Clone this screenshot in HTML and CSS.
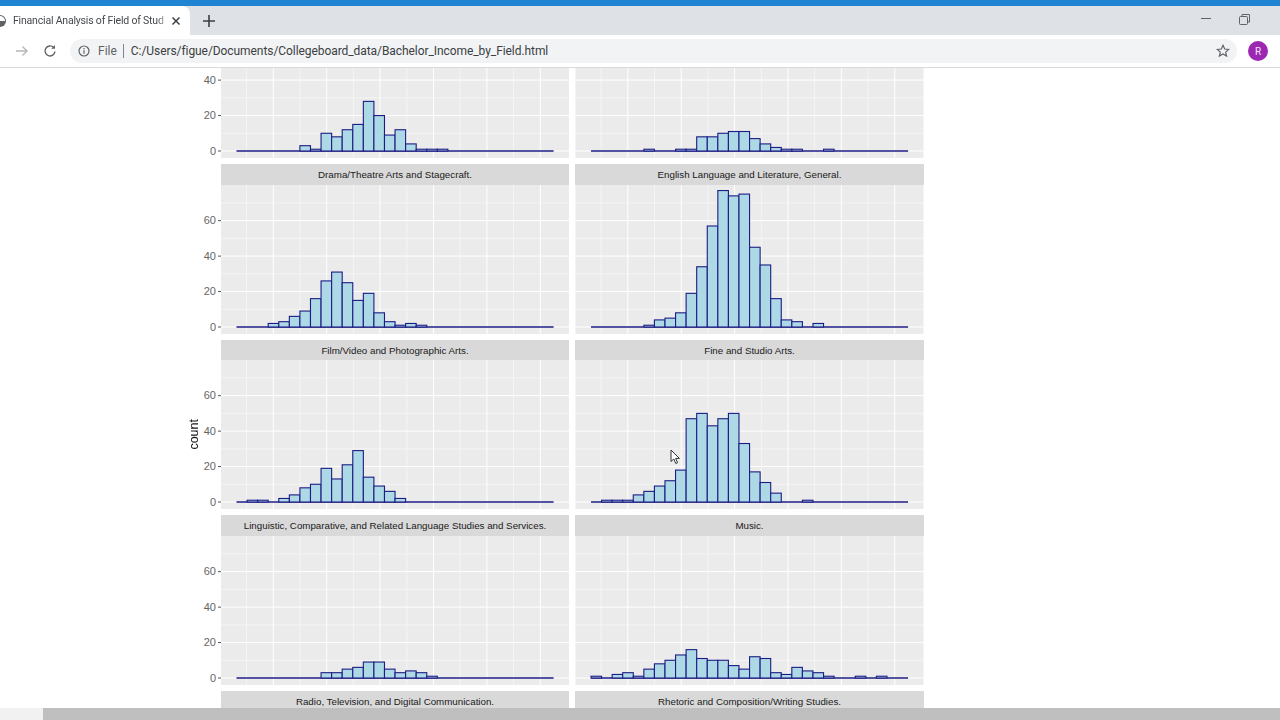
FILE: index.html
```html
<!DOCTYPE html>
<html lang="en">
<head>
<meta charset="utf-8">
<title>Financial Analysis of Field of Study</title>
<link rel="stylesheet" href="styles.css">
</head>
<body>
<div class="app">
  <div class="accent"></div>
  <div class="tabstrip">
    <div class="tab">
      <svg class="favicon" width="16" height="16" viewBox="0 0 16 16"><circle cx="8" cy="8" r="6" fill="#5f6368"/><path d="M8 3a5 5 0 0 1 5 5H8z" fill="#fff"/></svg>
      <span class="tab-title">Financial Analysis of Field of Stud</span>
      <svg class="tab-close" width="10" height="10" viewBox="0 0 10 10"><path d="M1.5 1.5l7 7M8.500 1.500l-7 7" stroke="#3c4043" stroke-width="1.500"/></svg>
    </div>
    <svg class="new-tab" width="12" height="12" viewBox="0 0 12 12"><path d="M6 0v12M0 6h12" stroke="#3c4043" stroke-width="1.600"/></svg>
    <div class="window-controls">
      <svg width="10" height="10" viewBox="0 0 10 10"><path d="M0 4.500h10" stroke="#5f6368" stroke-width="1"/></svg>
      <svg width="11" height="11" viewBox="0 0 11 11" fill="none" stroke="#5f6368"><rect x=".5" y="2.500" width="8" height="8" rx="1"/><path d="M3 2.500V.5h7.500v7.500H8.500"/></svg>
    </div>
  </div>
  <div class="toolbar">
    <svg class="nav-forward" width="14" height="14" viewBox="0 0 14 14" fill="none" stroke="#b4b6b9" stroke-width="1.400"><path d="M1 7h11M7.500 2.500L12 7l-4.500 4.500"/></svg>
    <svg class="nav-reload" width="14" height="14" viewBox="0 0 14 14" fill="none" stroke="#5f6368" stroke-width="1.400"><path d="M12 7.500A5 5 0 1 1 10.500 3.300"/><path d="M12 1v3.800H8.200" fill="#5f6368" stroke="none"/></svg>
    <div class="omnibox">
      <svg class="info" width="12" height="12" viewBox="0 0 12 12" fill="none" stroke="#5f6368" stroke-width="1.200"><circle cx="6" cy="6" r="5"/><path d="M6 5.200v3.600M6 3v1.200"/></svg>
      <span class="scheme">File</span>
      <span class="sep"></span>
      <span class="url">C:/Users/figue/Documents/Collegeboard_data/Bachelor_Income_by_Field.html</span>
      <svg class="star" width="14" height="14" viewBox="0 0 14 14" fill="none" stroke="#5f6368" stroke-width="1.200"><path d="M7 1.300l1.700 3.700 4 .4-3 2.700.9 4L7 10l-3.600 2.100.9-4-3-2.700 4-.4z"/></svg>
    </div>
    <div class="avatar">R</div>
  </div>
  <div class="viewport">
    <div class="plot">
      <div class="y-title">count</div>
      <div class="facets">
        <figure class="facet clipped"><svg class="hist with-axis" data-top="90" data-counts="0,0,0,0,0,0,3,1,10,8,12,15,28,20,9,12,4,1,1,1"></svg></figure>
        <figure class="facet clipped"><svg class="hist" data-top="90" data-counts="0,0,0,0,0,1,0,0,1,1,8,8,10,11,11,7,4,2,1,1,0,0,1"></svg></figure>

        <figure class="facet"><figcaption class="strip">Drama/Theatre Arts and Stagecraft.</figcaption><svg class="hist with-axis" data-counts="0,0,0,2,3,6,9,16,26,31,25,15,19,8,3,1,2,1"></svg></figure>
        <figure class="facet"><figcaption class="strip">English Language and Literature, General.</figcaption><svg class="hist" data-counts="0,0,0,0,0,1,4,5,8,19,34,57,77,74,75,45,35,16,4,3,0,2"></svg></figure>

        <figure class="facet"><figcaption class="strip">Film/Video and Photographic Arts.</figcaption><svg class="hist with-axis" data-counts="0,1,1,0,2,4,8,10,19,13,21,29,14,9,6,2"></svg></figure>
        <figure class="facet"><figcaption class="strip">Fine and Studio Arts.</figcaption><svg class="hist" data-counts="0,1,1,1,4,6,9,12,18,47,50,43,47,50,33,17,11,5,0,0,1"></svg></figure>

        <figure class="facet"><figcaption class="strip">Linguistic, Comparative, and Related Language Studies and Services.</figcaption><svg class="hist with-axis" data-counts="0,0,0,0,0,0,0,0,3,3,5,6,9,9,5,3,4,3,1"></svg></figure>
        <figure class="facet"><figcaption class="strip">Music.</figcaption><svg class="hist" data-counts="1,0,2,3,1,5,8,10,13,16,11,10,10,7,5,12,11,3,2,6,4,3,1,0,0,1,0,1"></svg></figure>

        <figure class="facet"><figcaption class="strip">Radio, Television, and Digital Communication.</figcaption></figure>
        <figure class="facet"><figcaption class="strip">Rhetoric and Composition/Writing Studies.</figcaption></figure>
      </div>
    </div>
    <svg class="cursor" width="12" height="16" viewBox="0 0 12 16"><path d="M1 1v11.500l2.800-2.500 2 4.500 1.800-.8-2-4.300h3.800z" fill="#fff" stroke="#333" stroke-width="1"/></svg>
  </div>
  <div class="scrollbar"><div class="scroll-thumb"></div></div>
</div>
<script src="app.js"></script>
</body>
</html>
```
FILE: styles.css
```css
* { box-sizing: border-box; }
html, body { margin: 0; height: 100%; overflow: hidden; background: #fff; }
body { font-family: "Liberation Sans", Arial, sans-serif; color: #3c4043; }

.app { display: flex; flex-direction: column; height: 720px; width: 1280px; overflow: hidden; }
.accent { height: 6px; background: #1f84d2; flex: none; }

.tabstrip { height: 29px; flex: none; background: #dee1e6; display: flex; align-items: center; }
.tab { width: 190px; height: 29px; padding-right: 9px; background: #fff; border-top-right-radius: 8px; display: flex; align-items: center; gap: 5px; flex: none; overflow: hidden; }
.favicon { flex: none; margin-left: -8px; }
.tab-title { font-size: 10.500px; color: #45484c; white-space: nowrap; flex: 1; min-width: 0; font-family: Roboto, sans-serif; letter-spacing: -.19px; -webkit-mask-image: linear-gradient(to right, #000 94%, rgba(0,0,0,.35)); mask-image: linear-gradient(to right, #000 94%, rgba(0,0,0,.35)); }
.tab-close { flex: none; }
.new-tab { margin-left: 13px; flex: none; }
.window-controls { margin-left: auto; padding-right: 30px; display: flex; align-items: center; gap: 28px; margin-top: -3px; }

.toolbar { height: 33px; flex: none; background: #fff; border-bottom: 1px solid #d9dadc; display: flex; align-items: center; padding: 0 12px 0 15px; }
.nav-forward { flex: none; }
.nav-reload { flex: none; margin-left: 14px; }
.omnibox { margin-left: 13px; flex: 1; height: 24px; background: #f1f3f4; border-radius: 12px; display: flex; align-items: center; padding: 0 7px 0 8px; font-size: 12px; font-family: Roboto, sans-serif; }
.info { flex: none; }
.scheme { margin-left: 8px; color: #5f6368; }
.sep { width: 1px; height: 14px; background: #80868b; margin: 0 7px 0 6px; }
.url { color: #3c4043; letter-spacing: -.07px; }
.star { margin-left: auto; }
.avatar { margin-left: 11px; width: 20px; height: 20px; border-radius: 50%; background: #9c27b0; color: #f3e5f5; font-size: 10px; display: flex; align-items: center; justify-content: center; flex: none; font-family: Roboto, sans-serif; }

.viewport { flex: 1; position: relative; overflow: hidden; background: #fff; }
.plot { display: flex; align-items: flex-start; padding-left: 188px; }
.y-title { writing-mode: vertical-rl; transform: rotate(180deg); font-size: 12.500px; color: #111; width: 13px; margin-top: 351px; margin-right: 20px; line-height: 13px; flex: none; }
.facets { display: grid; grid-template-columns: 348px 349px; column-gap: 6px; row-gap: 6px; }

.facet { margin: 0; min-width: 0; }
.strip { height: 20.500px; background: #d9d9d9; color: #1a1a1a; font-size: 9.750px; line-height: 21px; text-align: center; white-space: nowrap; }
.hist { display: block; width: 100%; height: 149px; overflow: visible; }
.clipped .hist { height: 90px; }

.panel-bg { fill: #ebebeb; }
.grid-major { stroke: #fff; stroke-width: 1; }
.grid-minor { stroke: #fff; stroke-width: .5; }
.bar { fill: #add8e6; stroke: #1c1c84; stroke-width: 1.100; }
.baseline { stroke: #1c1c84; stroke-width: 1.300; }
.tick { stroke: #555; stroke-width: 1; }
.tick-label { fill: #666; font-size: 11px; font-family: "Liberation Sans", Arial, sans-serif; text-anchor: end; }

.cursor { position: absolute; left: 670px; top: 381px; }

.scrollbar { height: 12px; flex: none; background: #f1f1f1; margin-top: -1px; position: relative; }
.scroll-thumb { height: 100%; margin-left: 43px; background: #bfbfbf; }
```
FILE: app.js
```js
// Draws each histogram panel from the bin counts in its data-counts attribute.
var NS = 'http://www.w3.org/2000/svg';
function el(parent, name, attrs, text) {
  var n = document.createElementNS(NS, name);
  for (var k in attrs) n.setAttribute(k, attrs[k]);
  if (text !== undefined) n.textContent = text;
  parent.appendChild(n);
  return n;
}
document.querySelectorAll('.hist').forEach(function (svg) {
  var W = 348, H = svg.dataset.top ? +svg.dataset.top : 149;
  var zero = H - 7, unit = 1.772, binW = 10.57, x0 = 15.5;
  svg.setAttribute('viewBox', '0 0 ' + W + ' ' + H);
  svg.setAttribute('width', W);
  svg.setAttribute('height', H);
  el(svg, 'rect', { class: 'panel-bg', x: 0, y: 0, width: W, height: H });
  var v;
  for (v = 10; v <= 70; v += 20) {
    var ym = zero - v * unit;
    if (ym > 0) el(svg, 'line', { class: 'grid-minor', x1: 0, x2: W, y1: ym, y2: ym });
  }
  for (var i = 0; i < 6; i++) {
    var xm = 52.3 + i * 53.4;
    el(svg, 'line', { class: 'grid-major', x1: xm, x2: xm, y1: 0, y2: H });
    el(svg, 'line', { class: 'grid-minor', x1: xm - 26.7, x2: xm - 26.7, y1: 0, y2: H });
  }
  for (v = 0; v <= 60; v += 20) {
    var y = zero - v * unit;
    if (y < 0) continue;
    el(svg, 'line', { class: 'grid-major', x1: 0, x2: W, y1: y, y2: y });
    if (svg.classList.contains('with-axis')) {
      el(svg, 'line', { class: 'tick', x1: -3, x2: 0, y1: y, y2: y });
      el(svg, 'text', { class: 'tick-label', x: -5, y: y + 3.7 }, String(v));
    }
  }
  el(svg, 'line', { class: 'baseline', x1: x0, x2: x0 + 30 * binW, y1: zero, y2: zero });
  svg.dataset.counts.split(',').forEach(function (c, idx) {
    c = +c;
    if (!c) return;
    el(svg, 'rect', { class: 'bar', x: x0 + idx * binW, y: zero - c * unit, width: binW, height: c * unit });
  });
});
```
